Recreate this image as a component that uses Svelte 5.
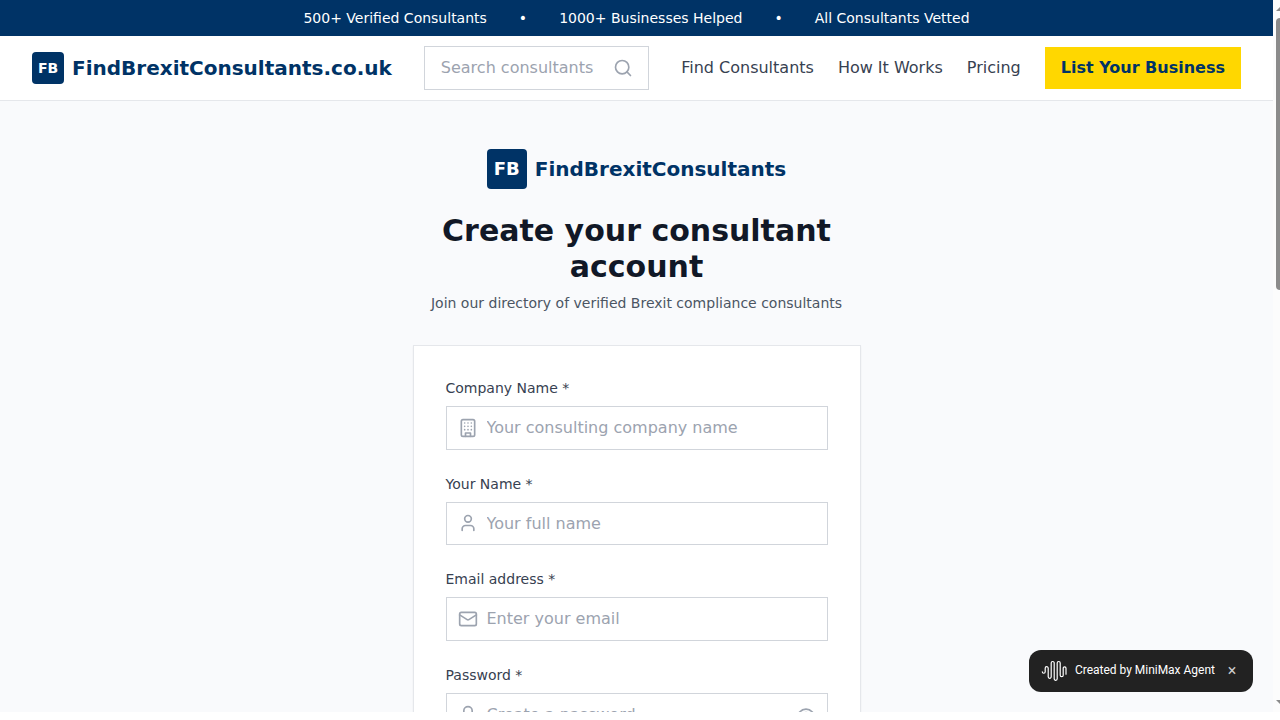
<script>
  const stats = ['500+ Verified Consultants', '1000+ Businesses Helped', 'All Consultants Vetted'];
  const links = ['Find Consultants', 'How It Works', 'Pricing'];
  const fields = [
    { id: 'company', label: 'Company Name *', hint: 'Your consulting company name', icon: 'building', type: 'text' },
    { id: 'name', label: 'Your Name *', hint: 'Your full name', icon: 'user', type: 'text' },
    { id: 'email', label: 'Email address *', hint: 'Enter your email', icon: 'mail', type: 'email' },
    { id: 'password', label: 'Password *', hint: 'Create a password', icon: 'lock', type: 'password' }
  ];
</script>

{#snippet icon(name)}
  <svg class="icon" viewBox="0 0 24 24" aria-hidden="true">
    {#if name === 'building'}
      <rect x="4" y="2" width="16" height="20" rx="2" />
      <path d="M9 22v-4h6v4M8 6h.01M16 6h.01M12 6h.01M12 10h.01M12 14h.01M16 10h.01M16 14h.01M8 10h.01M8 14h.01" />
    {:else if name === 'user'}
      <path d="M19 21v-2a4 4 0 0 0-4-4H9a4 4 0 0 0-4 4v2" />
      <circle cx="12" cy="7" r="4" />
    {:else if name === 'mail'}
      <rect x="2" y="4" width="20" height="16" rx="2" />
      <path d="m22 7-8.97 5.7a1.94 1.94 0 0 1-2.06 0L2 7" />
    {:else if name === 'lock'}
      <rect x="3" y="11" width="18" height="11" rx="2" />
      <path d="M7 11V7a5 5 0 0 1 10 0v4" />
    {:else if name === 'eye'}
      <path d="M2 12s3-7 10-7 10 7 10 7-3 7-10 7-10-7-10-7Z" />
      <circle cx="12" cy="12" r="3" />
    {:else}
      <circle cx="11" cy="11" r="8" />
      <path d="m21 21-4.3-4.3" />
    {/if}
  </svg>
{/snippet}

<div class="window">
  <div class="page">
    <div class="topbar">
      {#each stats as stat, i}
        {#if i > 0}<span>•</span>{/if}
        <span>{stat}</span>
      {/each}
    </div>

    <header>
      <div class="brand">
        <div class="mark">FB</div>
        <span>FindBrexitConsultants.co.uk</span>
      </div>
      <div class="search">
        <input type="text" placeholder="Search consultants by expertise..." aria-label="Search" />
        {@render icon('search')}
      </div>
      <nav>
        {#each links as link}<span>{link}</span>{/each}
        <button class="cta">List Your Business</button>
      </nav>
    </header>

    <main>
      <div class="brand">
        <div class="mark large">FB</div>
        <span>FindBrexitConsultants</span>
      </div>
      <h1>Create your consultant account</h1>
      <p>Join our directory of verified Brexit compliance consultants</p>
      <form>
        {#each fields as field}
          <div class="field">
            <label for={field.id}>{field.label}</label>
            <div class="control" class:secret={field.type === 'password'}>
              <input id={field.id} type={field.type} placeholder={field.hint} />
              {@render icon(field.icon)}
              {#if field.type === 'password'}
                <span class="reveal">{@render icon('eye')}</span>
              {/if}
            </div>
          </div>
        {/each}
      </form>
    </main>
  </div>

  <div class="scrollbar">
    <svg width="7" height="712" viewBox="0 0 7 712" aria-hidden="true">
      <path d="M3 11 7 7v4z" fill="#8b8b8b" />
      <rect x="3" y="18" width="9" height="272" rx="4" fill="#8b8b8b" />
      <path d="M3 700h4v4z" fill="#8b8b8b" />
    </svg>
  </div>

  <div class="badge">
    <svg class="wave" width="26" height="22" viewBox="0 0 26 22" aria-hidden="true">
      <path d="M1.3 11.8a1.45 1.45 0 0 0 2.9 0V8.2a1.5 1.5 0 0 1 3 0v8.6a1.5 1.5 0 0 0 3 0V3a1.5 1.5 0 0 1 3 0v15.8a1.5 1.5 0 0 0 3 0V3a1.5 1.5 0 0 1 3 0v12.2a1.5 1.5 0 0 0 3 0V8.2a1.4 1.4 0 0 1 2.8 0v6" />
    </svg>
    <span class="credit">Created by MiniMax Agent</span>
    <span class="close">×</span>
  </div>
</div>

<style>
  :global(body) { background: #fff; }
  .window, .window * { box-sizing: border-box; }
  .window {
    position: relative;
    display: flex;
    width: 1280px;
    height: 712px;
    overflow: hidden;
    font: 16px/24px "DejaVu Sans", sans-serif;
    color: #374151;
  }
  .page { width: 1273px; height: 712px; overflow: hidden; background: #f9fafc; }
  .topbar {
    display: flex;
    justify-content: center;
    gap: 32px;
    height: 36px;
    padding: 8px 0;
    background: #003366;
    color: #fff;
    font-size: 14px;
    line-height: 20px;
  }
  header {
    display: flex;
    align-items: center;
    height: 65px;
    padding: 0 32px;
    background: #fff;
    border-bottom: 1px solid #e5e7eb;
  }
  .brand {
    display: flex;
    align-items: center;
    gap: 8px;
    color: #003366;
    font-size: 20px;
    line-height: 28px;
    font-weight: 700;
  }
  .mark {
    display: flex;
    align-items: center;
    justify-content: center;
    width: 32px;
    height: 32px;
    border-radius: 4px;
    background: #003366;
    color: #fff;
    font-size: 14px;
  }
  .mark.large { width: 40px; height: 40px; font-size: 18px; }
  .search { position: relative; width: 225px; margin-left: 32px; }
  .search .icon { right: 16px; }
  input {
    display: block;
    width: 100%;
    height: 43.5px;
    padding: 0 48px 0 16px;
    border: 1px solid #d1d5db;
    border-radius: 0;
    background: #fff;
    font: inherit;
    color: inherit;
  }
  .search input { padding-right: 48.6px; padding-bottom: 1px; }
  input::placeholder { color: #9ca3af; opacity: 1; }
  .icon {
    position: absolute;
    top: 50%;
    width: 20px;
    height: 20px;
    transform: translateY(-50%);
    fill: none;
    stroke: #9ca3af;
    stroke-width: 2;
    stroke-linecap: round;
    stroke-linejoin: round;
  }
  nav { display: flex; align-items: center; gap: 24px; margin-left: 32.5px; white-space: nowrap; }
  .cta {
    height: 42px;
    padding: 0 16px;
    border: 0;
    background: #ffd700;
    color: #003366;
    font: inherit;
    font-weight: 700;
  }
  main { width: 448px; margin: 0 auto; padding-top: 48px; }
  main .brand { justify-content: center; }
  h1 {
    margin: 24px 0 8px;
    text-align: center;
    color: #111827;
    font-size: 30px;
    line-height: 36px;
    font-weight: 700;
  }
  p { margin: 0; text-align: center; font-size: 14px; line-height: 20px; color: #4b5563; white-space: nowrap; }
  form {
    display: flex;
    flex-direction: column;
    gap: 24px;
    margin-top: 32px;
    padding: 32px;
    background: #fff;
    border: 1px solid #e5e7eb;
    box-shadow: 0 1px 2px rgba(0, 0, 0, 0.05);
  }
  label { display: block; margin-bottom: 8px; font-size: 14px; line-height: 20px; }
  .control { position: relative; }
  .control input { padding-left: 40px; }
  .control .icon { left: 12px; }
  .control .reveal .icon { left: auto; right: 12px; }
  .secret .icon { margin-top: 1px; }
  .scrollbar { width: 7px; background: #fcfcfc; }
  .scrollbar svg { display: block; }
  .badge {
    position: absolute;
    left: 1029px;
    top: 650px;
    display: flex;
    align-items: center;
    width: 224px;
    height: 42px;
    padding-left: 12px;
    border-radius: 12px;
    background: #222;
    color: #fff;
    font: 12px/20px Roboto, sans-serif;
    white-space: nowrap;
  }
  .wave { fill: none; stroke: #fff; stroke-width: 1.2; stroke-linecap: round; }
  .credit { margin-left: 8px; padding-bottom: 2px; letter-spacing: -0.02px; }
  .close { margin-left: 12.8px; color: #ccc; font-size: 16px; }
</style>
